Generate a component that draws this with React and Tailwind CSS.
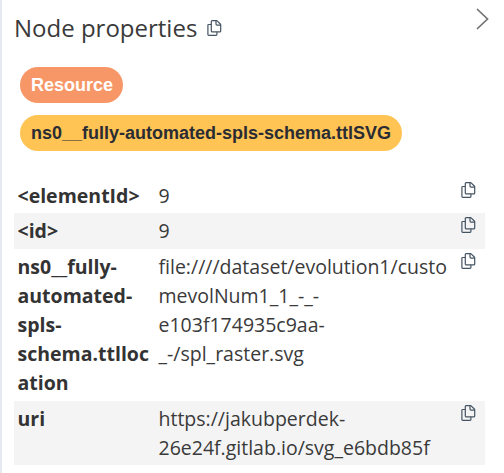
function CopyIcon() {
  return (
    <svg className="block h-4 w-[15px] shrink-0" viewBox="0 0 15 16" fill="none" stroke="#455463" strokeWidth="1.2" strokeLinejoin="round" strokeLinecap="round">
      <path d="M4.2 4.5H1.7Q.9 4.5.9 5.3v9.2q0 .8.8.8h7.4q.8 0 .8-.8v-2.1" />
      <path d="M5.1.7h4.4q.5 0 .9.4l2.9 2.9q.4.4.4.9v6q0 .9-1 .9H5.3q-1 0-1-.9V1.5q0-.8.8-.8Z" />
      <path d="M9 .9v3.2q0 1 1 1h3.5" />
    </svg>
  );
}

const rows = [
  { name: ["<elementId>"], value: ["9"], style: "h-[35px] pt-[3px]" },
  { name: ["<id>"], value: ["9"], style: "h-9 bg-[#f4f4f4] pt-[3px]" },
  {
    name: ["ns0__fully-", "automated-", "spls-", "schema.ttlloc", "ation"],
    value: ["file:////dataset/evolution1/custo", "mevolNum1_1_-_-", "e103f174935c9aa-", "_-/spl_raster.svg"],
    style: "h-[152px] pt-[3px]",
  },
  {
    name: ["uri"],
    value: ["https://jakubperdek-", "26e24f.gitlab.io/svg_e6bdb85f"],
    style: "h-16 bg-[#f4f4f4] pt-[3px]",
  },
];

function Lines({ items }) {
  return items.map((line) => (
    <span key={line} className="block whitespace-nowrap">{line}</span>
  ));
}

export default function App() {
  return (
    <main className="h-[473px] w-[504px] overflow-hidden border-l-2 border-[#e6e9f0] bg-white font-['Open_Sans','Noto_Sans',sans-serif] text-[#3a3a3a]">
      <header className="flex h-[67px] justify-between pl-3 pr-[15px]">
        <div className="flex pt-3">
          <h2 className="w-[193px] whitespace-nowrap text-[24px] leading-8">Node properties</h2>
          <div className="pt-2"><CopyIcon /></div>
        </div>
        <svg className="mt-2 h-[22px] w-[13px]" viewBox="0 0 13 22" fill="none" stroke="#717171" strokeWidth="1.7" strokeLinecap="round">
          <path d="m1.5 1.5 10 9.5-10 9.5" />
        </svg>
      </header>
      <div className="flex flex-col items-start gap-3 pl-[18px] font-['Liberation_Sans',Arial,sans-serif] text-[18px] font-bold leading-9">
        <span className="h-9 w-[103px] whitespace-nowrap rounded-full bg-[#f79767] pl-[11px] text-white">Resource</span>
        <span className="h-9 w-[382px] whitespace-nowrap rounded-full bg-[#ffc454] pl-[11px] text-[#2a2c34]">ns0__fully-automated-spls-schema.ttlSVG</span>
      </div>
      <div className="ml-3 mt-[27px] w-[471px] text-[19.5px] leading-[29px]">
        {rows.map((row) => (
          <div key={row.name[0]} className={`flex ${row.style}`}>
            <div className="w-[144.5px] shrink-0 pl-[3.5px] font-bold text-[#333333]"><Lines items={row.name} /></div>
            <div className="w-[302.5px] shrink-0"><Lines items={row.value} /></div>
            <div className="pt-px"><CopyIcon /></div>
          </div>
        ))}
      </div>
    </main>
  );
}
